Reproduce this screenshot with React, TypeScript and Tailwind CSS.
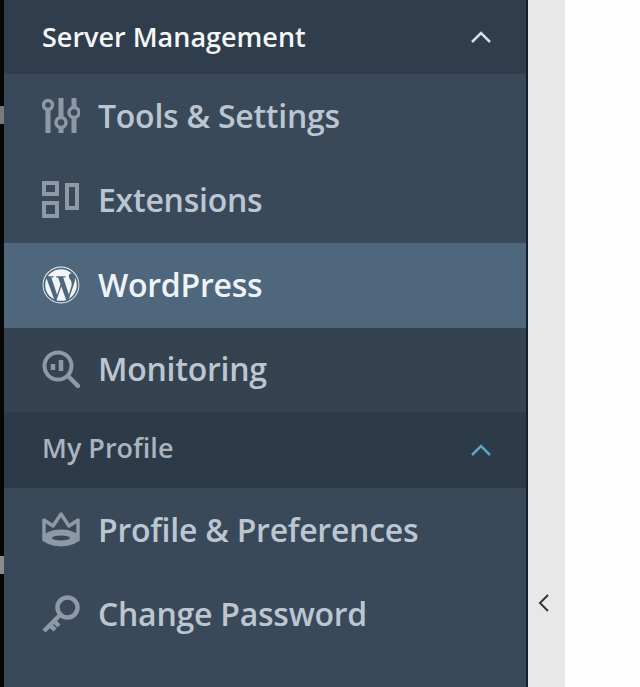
import { FaWordpress } from "react-icons/fa";

function ToolsIcon() {
  return (
    <svg viewBox="0 0 38 38" className="h-[38px] w-[38px]" fill="none" stroke="currentColor" strokeWidth="3.500">
      <circle cx="6" cy="8" r="4.500" />
      <path d="M6 13v23M19 1v19M19 31v5M32 1v9M32 21v15" strokeWidth="5" />
      <circle cx="19" cy="25.500" r="5" />
      <circle cx="32" cy="15.500" r="5" />
    </svg>
  );
}

function ExtensionsIcon() {
  return (
    <svg viewBox="0 0 38 38" className="h-[38px] w-[38px]" fill="none" stroke="currentColor" strokeWidth="4">
      <rect x="2" y="2" width="13" height="11" />
      <rect x="2" y="22" width="13" height="13" />
      <rect x="25" y="4" width="10" height="23" />
    </svg>
  );
}

function MonitoringIcon() {
  return (
    <svg viewBox="0 0 38 38" className="h-[38px] w-[38px]" fill="none" stroke="currentColor">
      <circle cx="16" cy="16" r="13.500" strokeWidth="4" />
      <path d="M11 14v6M19 10v11" strokeWidth="4.500" />
      <path d="M27 27l9 9" strokeWidth="4.500" strokeLinecap="round" />
    </svg>
  );
}

function CrownIcon() {
  return (
    <svg viewBox="0 0 38 38" className="h-[38px] w-[38px]" fill="none" stroke="currentColor" strokeWidth="3.500" strokeLinejoin="round">
      <path d="M2 9l9 6 8-12 8 12 9-6v20H2z" />
      <ellipse cx="19" cy="27" rx="18" ry="8.500" fill="currentColor" stroke="none" />
      <ellipse cx="19" cy="27" rx="9" ry="2.500" fill="#39495a" stroke="none" />
    </svg>
  );
}

function KeyIcon() {
  return (
    <svg viewBox="0 0 38 38" className="h-[38px] w-[38px]" fill="none" stroke="currentColor">
      <circle cx="25.500" cy="12.500" r="10" strokeWidth="4.500" />
      <path d="M18 20L2 36M8 30l5 5M12 26l5 5" strokeWidth="4.500" />
    </svg>
  );
}

function Chevron({ className }: { className: string }) {
  return (
    <svg viewBox="0 0 22 14" className={className} fill="none" stroke="currentColor" strokeWidth="2.500">
      <path d="M2 12l9-9 9 9" />
    </svg>
  );
}

function Item({ icon, label, active }: { icon: React.ReactNode; label: string; active?: boolean }) {
  return (
    <div
      className={`flex h-[84.500px] items-center gap-[18px] pb-[1px] pl-[38px] text-[32px] font-semibold tracking-[-0.25px] ${
        active ? "bg-[#4f677d] text-[#eef3f7]" : "text-[#bcc6d1]"
      }`}
    >
      <span className={active ? "text-[#f2f5f7]" : "text-[#8d99a6]"}>{icon}</span>
      <span>{label}</span>
    </div>
  );
}

export default function App() {
  return (
    <div className="flex h-[687px] w-[640px] overflow-hidden bg-white font-['Open_Sans',sans-serif]">
      <div className="flex w-[4px] flex-col bg-[#060606]">
        <div className="mt-[106px] h-[18px] bg-[#777b7d]" />
        <div className="mt-[432px] h-[18px] bg-[#8a8d8f]" />
      </div>
      <div className="flex w-[522px] flex-col bg-[#39495a]">
        <div className="flex h-[74px] items-center justify-between bg-[#2f3d4c] pl-[38px] pr-[34px] text-[27px] font-semibold text-[#f4f6f8]">
          <span>Server Management</span>
          <Chevron className="h-[14px] w-[22px] text-[#d8dee4]" />
        </div>
        <Item icon={<ToolsIcon />} label="Tools & Settings" />
        <Item icon={<ExtensionsIcon />} label="Extensions" />
        <Item icon={<FaWordpress className="h-[38px] w-[38px]" />} label="WordPress" active />
        <div className="bg-[#34434f]">
          <Item icon={<MonitoringIcon />} label="Monitoring" />
        </div>
        <div className="flex h-[76px] items-center justify-between bg-[#2d3a47] pl-[38px] pr-[34px] text-[27px] font-semibold text-[#a9b4bf]">
          <span className="mb-[3px]">My Profile</span>
          <Chevron className="h-[14px] w-[22px] text-[#5fa3c4]" />
        </div>
        <Item icon={<CrownIcon />} label="Profile & Preferences" />
        <Item icon={<KeyIcon />} label="Change Password" />
      </div>
      <div className="w-[2px] bg-[#14202e]" />
      <div className="flex w-[37px] items-start bg-[#e8e8e8] pl-[10px] pt-[593px]">
        <svg viewBox="0 0 12 20" className="h-[20px] w-[12px] text-[#33383e]" fill="none" stroke="currentColor" strokeWidth="2">
          <path d="M10 2L2 10l8 8" />
        </svg>
      </div>
      <div className="flex-1 bg-[#fdfdfd]" />
    </div>
  );
}
